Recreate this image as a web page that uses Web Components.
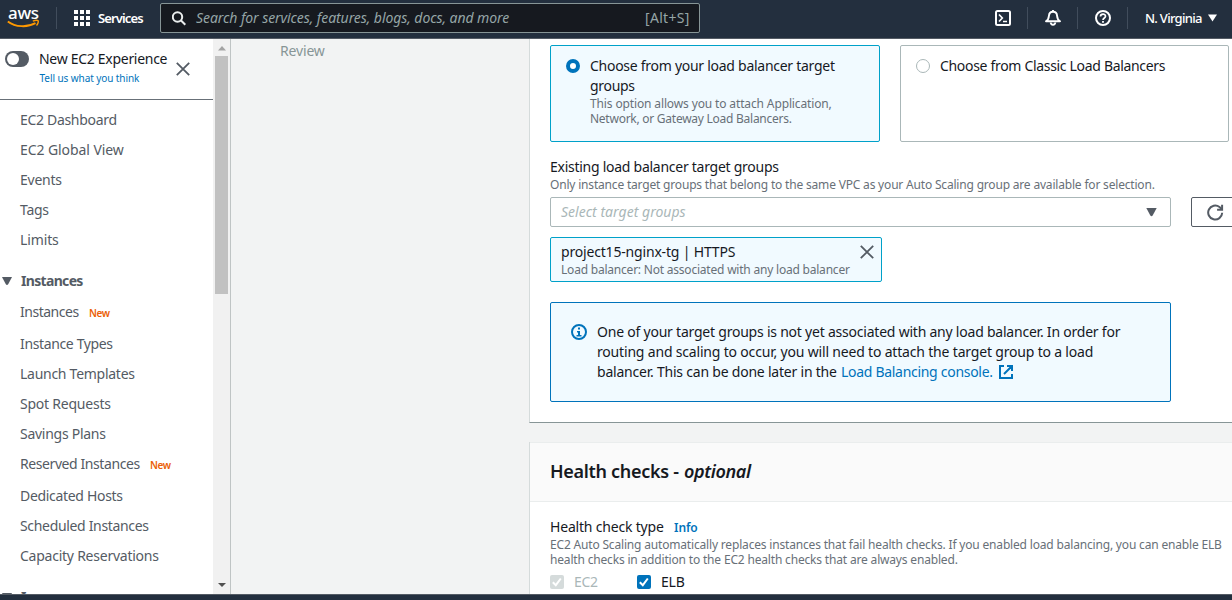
<!DOCTYPE html>
<html lang="en">
<head>
<meta charset="utf-8">
<title>EC2 Auto Scaling</title>
<style>
html,body{margin:0;height:600px;overflow:hidden;background:#f2f3f3}
body{font-family:"Noto Sans","Open Sans",sans-serif;font-size:14px;line-height:20px;color:#16191f}
</style>
</head>
<body>
<ec2-app></ec2-app>
<script>
const define=(name,css,html,init)=>{
  const t=document.createElement('template');
  t.innerHTML='<style>*{box-sizing:border-box}svg{display:block;flex:none}'+css+'</style>'+html;
  customElements.define(name,class extends HTMLElement{
    constructor(){super();this.attachShadow({mode:'open'}).append(t.content.cloneNode(true));}
    connectedCallback(){if(init)init(this,this.shadowRoot);}
  });
};

/* One line of text, tracked so that it fills the width in its w attribute. */
define('fit-text',':host{display:inline-block;white-space:nowrap;flex:none}','<slot></slot>',el=>{
  const fit=()=>{
    const w=+el.getAttribute('w'),n=el.textContent.length;
    el.style.letterSpacing='0px';el.style.width='auto';
    const natural=el.getBoundingClientRect().width;
    if(natural)el.style.letterSpacing=((w-.3-natural)/n).toFixed(4)+'px';
    el.style.width=w+'px';
  };
  requestAnimationFrame(fit);
});

define('close-icon',':host{display:block}',
'<svg width="14" height="14" viewBox="0 0 14 14" fill="none" stroke="#545b64" stroke-width="1.8"><path d="M.8.8l12.4 12.4M13.2.8L.8 13.2"/></svg>');

define('aws-logo',`:host{display:block;width:31px;height:24px;color:#fff}
.t{height:15px;line-height:14px;font-size:17px;font-weight:500}svg{margin:-2px 0 0 -1px}`,
`<div class="t"><fit-text w="31">aws</fit-text></div>
<svg width="33" height="9" viewBox="0 0 33 9" fill="none" stroke="#f90"><path d="M.8 2.400C8.500 8.300 20.500 8.600 28.500 4.200" stroke-width="1.900"/><path d="M25.800 2.100c2-.8 4.800-.8 5.300-.3.500.6-.1 3.200-1.600 4.700" stroke-width="1.400"/></svg>`);

define('top-bar',`:host{display:flex;align-items:center;height:39px;background:#232f3e;border-bottom:1px solid #545b64;color:#fff;padding:0 0 2px 8px;font-size:13px}
.sep{width:1px;height:22px;background:#414d5c;flex:none}
.services{display:flex;align-items:center;gap:8px;margin:0 17px 0 17px;font-weight:600}
.search{width:540px;height:30px;border:1px solid #879596;border-radius:2px;background:#16191f;color:#95a5a6;display:flex;align-items:center;padding:0 9px 0 11px;font-size:14px;margin-right:auto}
.search i{margin-left:9px;flex:1}
.tools{display:flex;align-items:center}
.tools svg.i{margin:0 16px 0 17px}
.region{display:flex;align-items:center;gap:6px;margin:0 15px 0 17px;font-weight:500}
aws-logo{margin-right:17px;margin-top:-1px}`,
`<aws-logo></aws-logo><span class="sep"></span>
<div class="services"><svg width="16" height="16" fill="#fff"><path d="M0 0h4v4H0zM6 0h4v4H6zM12 0h4v4h-4zM0 6h4v4H0zM6 6h4v4H6zM12 6h4v4h-4zM0 12h4v4H0zM6 12h4v4H6zM12 12h4v4h-4z"/></svg><fit-text w="45">Services</fit-text></div>
<div class="search"><svg width="15" height="15" fill="none" stroke="#eaeded" stroke-width="2"><circle cx="5.500" cy="6" r="4.700"/><path d="M8.800 9.300l4.500 4.500"/></svg><i><fit-text w="313.500">Search for services, features, blogs, docs, and more</fit-text></i><fit-text w="45">[Alt+S]</fit-text></div>
<div class="tools">
<svg class="i" width="16" height="16" fill="none" stroke="#fff" stroke-width="2"><rect x="1" y="1" width="14" height="14" rx="1.500"/><path d="M4 4.500L7.300 8 4 11.500M8 11.500h4" stroke-width="1.700"/></svg><span class="sep"></span>
<svg class="i" width="16" height="16" fill="none" stroke="#fff" stroke-width="1.900" stroke-linejoin="round"><path d="M1 11.300c2.200-1.300 2.700-3 2.900-5.300C4.100 3.300 5.500 1.800 8 1.800S11.900 3.300 12.100 6c.2 2.300.7 4 2.900 5.300z"/><path d="M5.700 12.500c.2 3 4.400 3 4.600 0M8 0v2"/></svg><span class="sep"></span>
<svg class="i" width="16" height="16" fill="none" stroke="#fff" stroke-width="2"><circle cx="8" cy="8" r="7"/><path d="M5.500 6.500C5.500 3.300 10.500 3.300 10.500 6.300 10.500 8 8 8 8 10" stroke-width="1.700"/><path d="M8 11v1.800" stroke-width="1.800"/></svg><span class="sep"></span>
<div class="region"><fit-text w="57">N. Virginia</fit-text><svg width="9" height="8" fill="#fff"><path d="M0 .5h9L4.500 7.500z"/></svg></div></div>`);

define('nav-item',`:host{display:flex;height:30px;align-items:center;padding-left:20px;color:#545b64;flex:none}
:host([fresh]){margin-bottom:2px}
b{display:none;color:#eb5f07;font-size:10px;font-weight:600;margin:2px 0 0 10px}:host([fresh]) b{display:block}`,
'<slot></slot><b><fit-text w="21">New</fit-text></b>');

define('nav-section',`:host{display:flex;height:30px;align-items:center;gap:9px;margin:11px 0 1px 2px;color:#545b64;font-weight:700;flex:none}`,
'<svg width="10" height="8" fill="#545b64"><path d="M0 0h10L6.300 7Q5 8.800 3.700 7z"/></svg><slot></slot>');

define('side-nav',`:host{display:flex;width:231px;border-right:1px solid #bfc4c4;background:#fff;overflow:hidden;flex:none}
.col{width:213px;display:flex;flex-direction:column}
header{height:61px;border-bottom:1px solid #687078;display:flex;padding:12px 0 0 5px;flex:none;margin-bottom:5px}
.toggle{width:24px;height:16px;border-radius:8px;background:#545b64;display:flex;padding:2px;flex:none}
.toggle::before{content:"";width:12px;height:12px;border-radius:50%;background:#fff}
.tt{margin:-2px 8px 0 10px;width:128.500px}.tt small{display:block;font-size:10px;line-height:19px;color:#0073bb;padding-left:.6px}
close-icon{margin-top:11px}
.bar{width:17px;background:#f1f1f1;display:flex;flex-direction:column;align-items:center;justify-content:space-between;padding:7px 0}
.thumb{width:13px;height:238px;background:#c1c1c1;margin:5px 0 auto}`,
`<div class="col"><header><span class="toggle"></span><div class="tt"><fit-text w="128.500">New EC2 Experience</fit-text><small><fit-text w="100">Tell us what you think</fit-text></small></div><close-icon></close-icon></header>
<nav-item><fit-text w="97">EC2 Dashboard</fit-text></nav-item>
<nav-item><fit-text w="104">EC2 Global View</fit-text></nav-item>
<nav-item><fit-text w="42">Events</fit-text></nav-item>
<nav-item><fit-text w="29">Tags</fit-text></nav-item>
<nav-item><fit-text w="39">Limits</fit-text></nav-item>
<nav-section><fit-text w="62">Instances</fit-text></nav-section>
<nav-item fresh><fit-text w="59">Instances</fit-text></nav-item>
<nav-item><fit-text w="93">Instance Types</fit-text></nav-item>
<nav-item><fit-text w="115">Launch Templates</fit-text></nav-item>
<nav-item><fit-text w="91">Spot Requests</fit-text></nav-item>
<nav-item><fit-text w="86">Savings Plans</fit-text></nav-item>
<nav-item fresh><fit-text w="120">Reserved Instances</fit-text></nav-item>
<nav-item><fit-text w="103">Dedicated Hosts</fit-text></nav-item>
<nav-item><fit-text w="129">Scheduled Instances</fit-text></nav-item>
<nav-item><fit-text w="139">Capacity Reservations</fit-text></nav-item>
<nav-section><fit-text w="46">Images</fit-text></nav-section></div>
<div class="bar"><svg width="8" height="5" fill="#a3a3a3"><path d="M0 4.500L4 0l4 4.500z"/></svg><div class="thumb"></div><svg width="8" height="4" fill="#505050"><path d="M0 0h8L4 4z"/></svg></div>`);

define('radio-tile',`:host{display:flex;gap:10px;height:97px;border:1px solid #aab7b8;border-radius:2px;padding:10px 15px;background:#fff;flex:none}
:host([checked]){background:#f1faff;border-color:#00a1c9}
.r{width:14px;height:14px;border:1px solid #aab7b8;border-radius:50%;background:#fff;margin-top:3px;flex:none}
:host([checked]) .r{border:4px solid #0073bb}`,'<span class="r"></span><div><slot></slot></div>');

define('sub-text',':host{display:block;font-size:12px;line-height:15px;color:#687078}','<slot></slot>');

define('check-box',`:host{display:flex;align-items:center;gap:10px}
.b{width:14px;height:14px;border-radius:2px;background:#0073bb}:host([disabled]) .b{background:#d5dbdb}:host([disabled]){color:#aab7b8}`,
'<span class="b"><svg width="14" height="14" fill="none" stroke="#fff" stroke-width="2"><path d="M2.800 7.200l3 3 5-6.700"/></svg></span><slot></slot>');

define('target-select',`:host{display:flex;gap:20px;height:30px}
.s{width:621px;border:1px solid #aab7b8;border-radius:2px;display:flex;align-items:center;justify-content:space-between;padding:0 13px 0 10px;color:#aab7b8;font-style:italic;flex:none}
.b{width:60px;border:1px solid #545b64;border-radius:2px;padding:6px 0 0 15px;flex:none}`,
`<div class="s"><fit-text w="125">Select target groups</fit-text><svg width="11" height="9" fill="#545b64"><path d="M.3 0h10.400L6.800 7.300Q5.500 9 4.200 7.300z"/></svg></div>
<div class="b"><svg width="17" height="17" fill="none" stroke="#545b64" stroke-width="2"><path d="M15.200 8.800A7 7 0 1 1 12.500 3L15 5.400"/><path d="M15.100.8v5h-5"/></svg></div>`);

define('target-token',`:host{display:flex;justify-content:space-between;width:332px;height:45px;margin-top:10px;border:1px solid #00a1c9;border-radius:2px;background:#f1faff;padding:4px 7px 0 10px}
sub-text{line-height:16px}close-icon{margin-top:3px}`,
'<div><fit-text w="174.500">project15-nginx-tg | HTTPS</fit-text><sub-text><fit-text w="289">Load balancer: Not associated with any load balancer</fit-text></sub-text></div><close-icon></close-icon>');

define('info-alert',`:host{display:flex;gap:10px;width:621px;height:100px;margin-top:20px;border:1px solid #0073bb;border-radius:2px;background:#f1faff;padding:19px 20px}
.i{margin-top:2px}.l{display:flex;color:#0073bb}.l svg{margin:3px 0 0 6px}.l span{color:#16191f;margin-right:4px}`,
`<svg class="i" width="16" height="16" fill="none" stroke="#0073bb" stroke-width="2"><circle cx="8" cy="8" r="7"/><path d="M7 3.500h2v2H7zM6 7h3v4h1.500v1.500h-5V11H7V8.500H6z" fill="#0073bb" stroke="none"/></svg>
<div><fit-text w="523.500">One of your target groups is not yet associated with any load balancer. In order for</fit-text><br><fit-text w="496.500">routing and scaling to occur, you will need to attach the target group to a load</fit-text><br>
<div class="l"><span><fit-text w="240">balancer. This can be done later in the</fit-text></span><fit-text w="152">Load Balancing console.</fit-text><svg width="14" height="14" fill="none" stroke="#0073bb" stroke-width="2"><path d="M5 1H1v12h12V9M8 1h5v5M13 1L5 9"/></svg></div></div>`);

define('form-panel',`:host{display:block;width:760px;background:#fff;border-left:1px solid #d5dbdb;flex:none}
.head{display:none;height:60px;background:#fafafa;border-top:1px solid #eaeded;border-bottom:1px solid #eaeded;padding:17px 20px 0;font-size:18px;line-height:22px;font-weight:600}
:host([titled]) .head{display:flex;gap:5px}
.body{padding:0 20px}`,'<div class="head"><slot name="title"></slot></div><div class="body"><slot></slot></div>');

define('ec2-app',`:host{display:grid;grid-template-rows:39px 555px 6px;height:600px;overflow:hidden}
main{display:flex;overflow:hidden;min-width:0}
.steps{width:298px;padding:2px 0 0 49px;color:#879596;flex:none}
.content{display:flex;flex-direction:column;gap:19px}
.one{height:384px;border-bottom:1px solid #879596;padding-top:6px}
.tiles{display:grid;grid-template-columns:330px 329px;gap:20px;margin-bottom:15px}
.desc{line-height:15px;margin-bottom:5px}
.two{height:200px}
.lab{display:flex;align-items:flex-start;gap:10px;margin-top:15px;height:20px}
.lab b{font-size:12px;font-weight:600;color:#0073bb;margin-top:1px}
.checks{display:flex;gap:39px;margin-top:5px}
footer{background:#232f3e;border-top:1px solid #545b64}`,
`<top-bar></top-bar>
<main><side-nav></side-nav><div class="steps"><fit-text w="45">Review</fit-text></div>
<div class="content">
<form-panel class="one"><div class="tiles">
<radio-tile checked><fit-text w="245">Choose from your load balancer target</fit-text><br><fit-text w="45">groups</fit-text><sub-text><fit-text w="242">This option allows you to attach Application,</fit-text><br><fit-text w="202">Network, or Gateway Load Balancers.</fit-text></sub-text></radio-tile>
<radio-tile><fit-text w="225.500">Choose from Classic Load Balancers</fit-text></radio-tile></div>
<fit-text w="229">Existing load balancer target groups</fit-text>
<sub-text class="desc"><fit-text w="605">Only instance target groups that belong to the same VPC as your Auto Scaling group are available for selection.</fit-text></sub-text>
<target-select></target-select><target-token></target-token><info-alert></info-alert></form-panel>
<form-panel class="two" titled><fit-text slot="title" w="129">Health checks -</fit-text><i slot="title"><fit-text w="67">optional</fit-text></i>
<div class="lab"><fit-text w="114">Health check type</fit-text><b><fit-text w="24">Info</fit-text></b></div>
<sub-text><fit-text w="672">EC2 Auto Scaling automatically replaces instances that fail health checks. If you enabled load balancing, you can enable ELB</fit-text><br><fit-text w="408">health checks in addition to the EC2 health checks that are always enabled.</fit-text></sub-text>
<div class="checks"><check-box disabled><fit-text w="24">EC2</fit-text></check-box><check-box><fit-text w="24">ELB</fit-text></check-box></div></form-panel>
</div></main><footer></footer>`);
</script>
</body>
</html>
